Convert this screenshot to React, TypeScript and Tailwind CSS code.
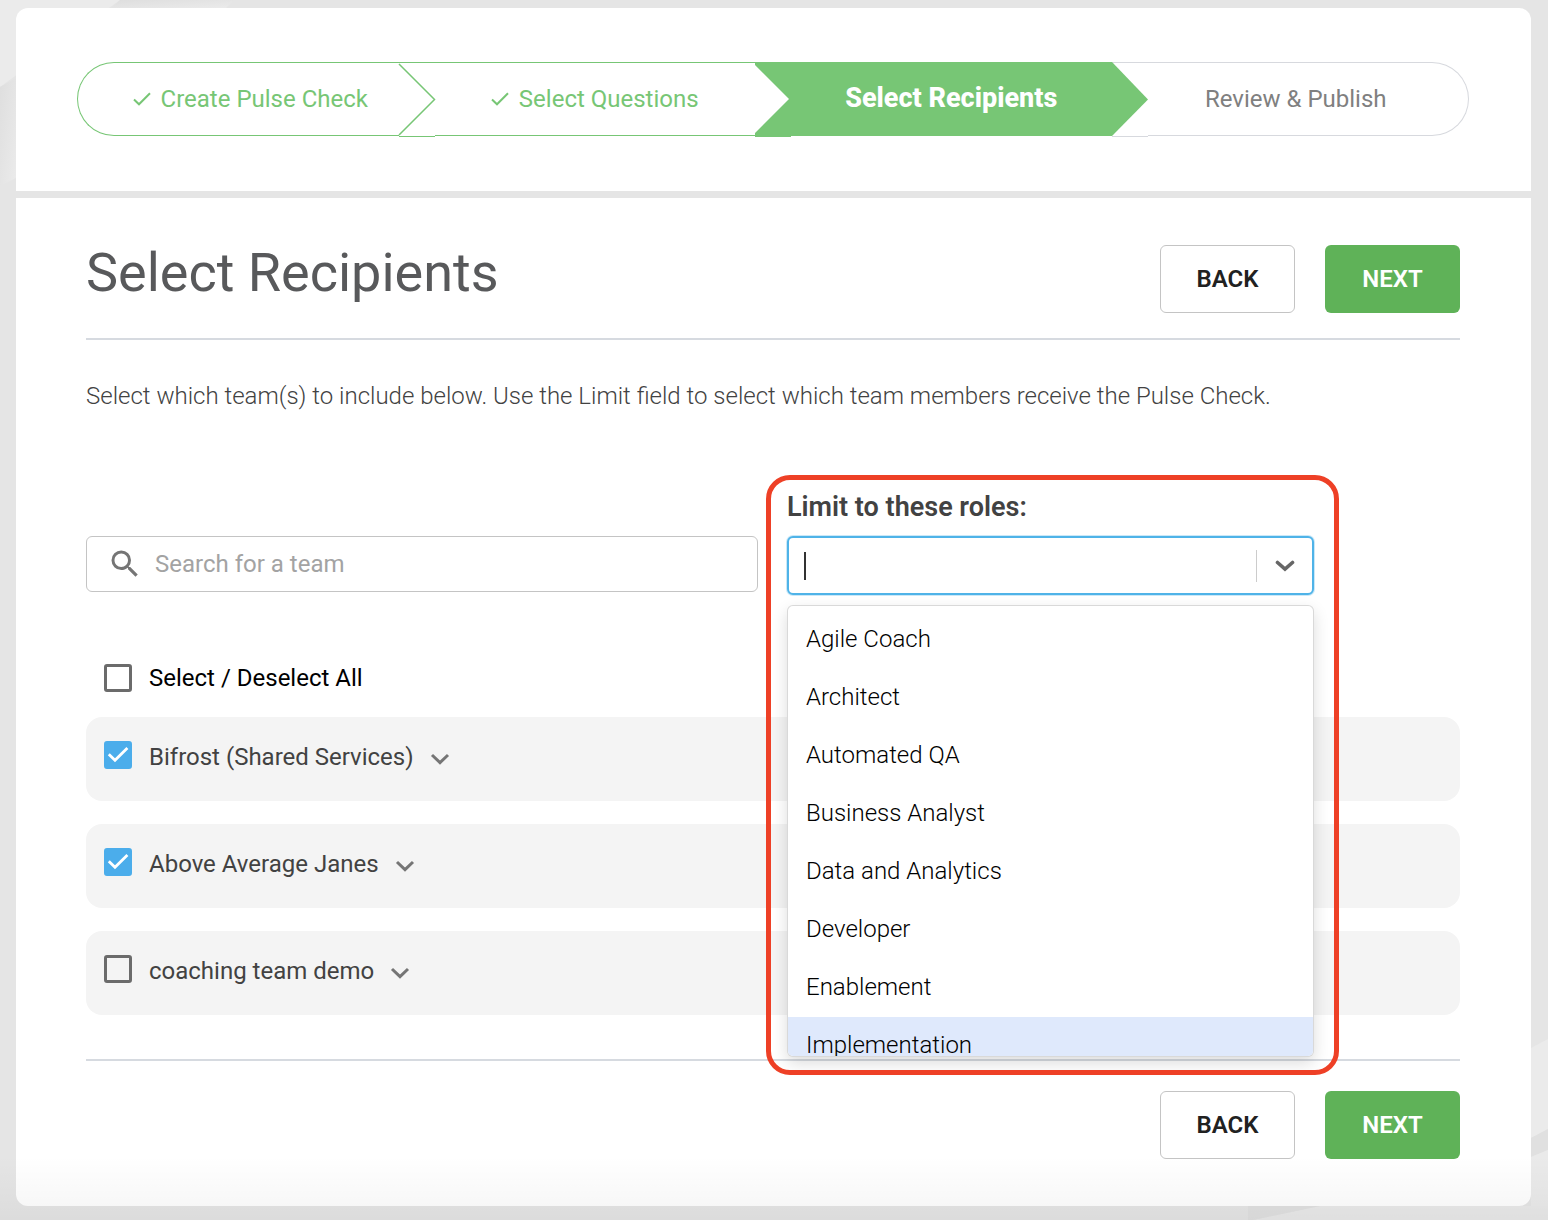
import { useState } from 'react';
import { MdSearch } from 'react-icons/md';

interface Team {
  id: string;
  name: string;
  selected: boolean;
}

const initialTeams: Team[] = [
  { id: 'bifrost', name: 'Bifrost (Shared Services)', selected: true },
  { id: 'janes', name: 'Above Average Janes', selected: true },
  { id: 'coaching', name: 'coaching team demo', selected: false },
];

const roles = [
  'Agile Coach',
  'Architect',
  'Automated QA',
  'Business Analyst',
  'Data and Analytics',
  'Developer',
  'Enablement',
  'Implementation',
];

function StepCheck() {
  return (
    <svg viewBox="0 0 18 14" className="h-3.5 w-[18px]" fill="none" stroke="currentColor" strokeWidth="2">
      <path d="M1 7.5 6 12.3 17 1.2" />
    </svg>
  );
}

// separator between two finished steps
function OutlineArrow() {
  return (
    <svg viewBox="0 0 36 74" className="h-[74px] w-9 shrink-0 overflow-visible" fill="none" stroke="#77c675">
      <path d="M0 .5H36M0 74.5H36" />
      <path d="M0 2 35.5 37.5 0 73" strokeWidth="1.5" />
    </svg>
  );
}

// separator leading into the active step
function NotchArrow() {
  return (
    <svg viewBox="0 0 36 74" className="h-[74px] w-9 shrink-0 overflow-visible" fill="#77c675">
      <path d="M0 0H36V75H0V71L34 37 0 3Z" />
    </svg>
  );
}

// separator leading out of the active step
function PointArrow() {
  return (
    <svg viewBox="0 0 36 74" className="h-[74px] w-9 shrink-0 overflow-visible">
      <path d="M0 .5H36M0 74.5H36" fill="none" stroke="#d7d9de" />
      <path d="M0 0 36 37.5 0 74Z" fill="#77c675" />
    </svg>
  );
}

function Stepper() {
  return (
    <ol className="flex h-[74px] text-2xl">
      <li className="flex flex-1 items-center justify-center rounded-l-full border-y border-l border-[#77c675] text-[#77c675]">
        <span className="flex items-center gap-2.5 pl-6">
          <StepCheck />
          Create Pulse Check
        </span>
      </li>
      <OutlineArrow />
      <li className="flex flex-1 items-center justify-center gap-2.5 border-y border-[#77c675] text-[#77c675]">
        <StepCheck />
        Select Questions
      </li>
      <NotchArrow />
      <li aria-current="step" className="flex flex-1 items-center justify-center bg-[#77c675] text-[27px] font-extrabold text-white">
        Select Recipients
      </li>
      <PointArrow />
      <li className="flex flex-1 items-center justify-center rounded-r-full border-y border-r border-[#d7d9de] text-[#808080]">
        <span className="pr-6">Review &amp; Publish</span>
      </li>
    </ol>
  );
}

function NavButtons() {
  return (
    <div className="flex gap-[30px] text-2xl">
      <button type="button" className="h-[68px] w-[135px] rounded-md border border-[#c4c4c4] bg-white font-semibold text-[#212121]">
        BACK
      </button>
      <button type="button" className="h-[68px] w-[135px] rounded-md bg-[#5fb258] font-semibold text-white">
        NEXT
      </button>
    </div>
  );
}

interface CheckboxProps {
  id: string;
  checked: boolean;
  onChange: () => void;
}

function Checkbox({ id, checked, onChange }: CheckboxProps) {
  return (
    <span className="relative block size-7 shrink-0">
      <input
        id={id}
        type="checkbox"
        checked={checked}
        onChange={onChange}
        className="block size-7 appearance-none rounded-[3px] border-3 border-[#6b6b6b] checked:border-[#4badeb] checked:bg-[#4badeb]"
      />
      {checked && (
        <svg viewBox="0 0 28 28" className="pointer-events-none absolute inset-0 size-7" fill="none" stroke="#fff" strokeWidth="2.8">
          <path d="M4.8 13.2 11 19.3 23.4 7" />
        </svg>
      )}
    </span>
  );
}

function RoleSelect() {
  const [query, setQuery] = useState('');
  const [activeRole, setActiveRole] = useState('Implementation');

  return (
    <div className="relative">
      <label htmlFor="roles" className="mb-[11px] block text-[27px] leading-9 font-semibold text-[#424242]">
        Limit to these roles:
      </label>
      <div className="relative">
        <div className="flex h-[59px] items-center rounded-md border-2 border-[#4fb3e8] bg-white ring-1 ring-[#4fb3e8]/30">
          {query === '' && <span className="ml-[15px] h-7 w-0.5 shrink-0 bg-[#333333]" />}
          <input
            id="roles"
            role="combobox"
            aria-expanded="true"
            aria-controls="role-options"
            value={query}
            onChange={(event) => setQuery(event.target.value)}
            className="h-full min-w-0 flex-1 px-1 text-2xl font-light outline-none"
          />
          <button type="button" aria-label="Toggle roles" className="flex h-8 w-14 items-center justify-center border-l border-[#cccccc]">
            <svg viewBox="0 0 20 12" className="h-3 w-5" fill="none" stroke="#666666" strokeWidth="3.6" strokeLinecap="round">
              <path d="M2.5 2.5 10 9.2l7.5-6.7" />
            </svg>
          </button>
        </div>
        <ul
          id="role-options"
          role="listbox"
          className="absolute inset-x-0 top-full z-10 mt-2.5 h-[452px] overflow-hidden rounded-md border border-black/15 bg-white pt-[5px] text-2xl font-light text-black shadow-[0_6px_16px_rgba(0,0,0,0.14)]"
        >
          {roles.map((role) => (
            <li
              key={role}
              role="option"
              aria-selected={role === activeRole}
              onMouseEnter={() => setActiveRole(role)}
              className={`px-[18px] pb-0.5 leading-14 ${role === activeRole ? 'bg-[#dfe9fc]' : ''}`}
            >
              {role}
            </li>
          ))}
        </ul>
      </div>
      <div className="pointer-events-none absolute -top-3.5 -right-[25px] -left-[21px] z-20 h-[600px] rounded-3xl border-5 border-[#ee4026]" />
    </div>
  );
}

function Backdrop() {
  return (
    <>
      <svg viewBox="0 0 240 190" className="absolute top-0 left-0 h-[190px] w-60">
        <defs>
          <linearGradient id="facet" x1="0" y1="0" x2="1" y2="1">
            <stop offset="0" stopColor="#dedede" />
            <stop offset="1" stopColor="#ebebeb" />
          </linearGradient>
        </defs>
        <path d="M0 0H120L0 87Z" fill="#ebebeb" />
        <path d="M120 0H234L226 8H111Z" fill="url(#facet)" />
        <path d="M0 87 16 78V178L0 186Z" fill="url(#facet)" />
      </svg>
      <svg viewBox="0 0 300 200" className="absolute right-0 bottom-0 h-[200px] w-[300px]">
        <path d="M283 28 300 19V109L283 118Z" fill="#ebebeb" />
        <path d="M283 118 300 109V130L283 137Z" fill="#e0e0e0" />
        <path d="M283 137 300 130V200H283Z" fill="#eaeaea" />
        <path d="M5 200 72 186H300V200Z" fill="#e9e9e9" />
        <path d="M0 186H72L5 200H0Z" fill="#e0e0e0" />
      </svg>
    </>
  );
}

function App() {
  const [teams, setTeams] = useState<Team[]>(initialTeams);
  const [search, setSearch] = useState('');
  const allSelected = teams.every((team) => team.selected);
  const visibleTeams = teams.filter((team) => team.name.toLowerCase().includes(search.toLowerCase()));

  const toggleTeam = (teamId: string) => {
    setTeams((currentTeams) =>
      currentTeams.map((team) => (team.id === teamId ? { ...team, selected: !team.selected } : team)),
    );
  };

  const toggleAll = () => {
    setTeams((currentTeams) => currentTeams.map((team) => ({ ...team, selected: !allSelected })));
  };

  return (
    <div className="relative min-h-screen bg-[#e5e5e5] pt-2 pr-[17px] pb-3.5 pl-4 font-[Roboto,sans-serif] text-[#424242]">
      <Backdrop />
      <header className="relative rounded-t-xl bg-white pt-[54px] pr-[62px] pb-[55px] pl-[61px]">
        <Stepper />
      </header>

      <main className="relative mt-[7px] rounded-b-xl bg-white pt-[47px] pr-[71px] pb-[47px] pl-[70px]">
        <div className="flex items-start justify-between border-b-2 border-[#d6dae0] pb-[25px]">
          <h1 className="text-[54px] leading-14 text-[#58595b]">Select Recipients</h1>
          <NavButtons />
        </div>
        <p className="mt-[38px] text-2xl leading-9 font-light">
          Select which team(s) to include below. Use the Limit field to select which team members receive the Pulse Check.
        </p>

        <div className="mt-[75px] grid grid-cols-[672fr_527fr_117fr] items-end gap-[29px]">
          <div className="mb-[3px] flex h-14 items-center rounded-md border border-[#c4c4c4] pl-5">
            <MdSearch className="size-9 shrink-0 text-[#757575]" />
            <input
              type="text"
              aria-label="Search for a team"
              placeholder="Search for a team"
              value={search}
              onChange={(event) => setSearch(event.target.value)}
              className="h-full min-w-0 flex-1 px-3 text-2xl outline-none placeholder:text-[#a3a3a3]"
            />
          </div>
          <RoleSelect />
        </div>

        <div className="mt-[67px] flex items-center gap-[17px] pl-[18px] text-2xl text-black">
          <Checkbox id="select-all" checked={allSelected} onChange={toggleAll} />
          <label htmlFor="select-all">Select / Deselect All</label>
        </div>

        <ul className="mt-[23px] grid gap-[23px]">
          {visibleTeams.map((team) => (
            <li key={team.id} className="flex h-[84px] items-start rounded-2xl bg-[#f4f4f4] px-[18px] pt-6 text-2xl">
              <Checkbox id={team.id} checked={team.selected} onChange={() => toggleTeam(team.id)} />
              <label htmlFor={team.id} className="ml-[17px]">
                {team.name}
              </label>
              <button type="button" aria-label={`Expand ${team.name}`} className="ml-4 flex h-9 items-center">
                <svg viewBox="0 0 20 12" className="h-3 w-5" fill="none" stroke="#757575" strokeWidth="3">
                  <path d="M2 2 10 9.6 18 2" />
                </svg>
              </button>
            </li>
          ))}
        </ul>

        <div className="mt-11 flex justify-end border-t-2 border-[#d6dae0] pt-[30px]">
          <NavButtons />
        </div>
      </main>

      <div className="pointer-events-none absolute inset-x-0 bottom-0 h-16 bg-linear-to-b from-transparent to-black/4" />
    </div>
  );
}

export default App;
